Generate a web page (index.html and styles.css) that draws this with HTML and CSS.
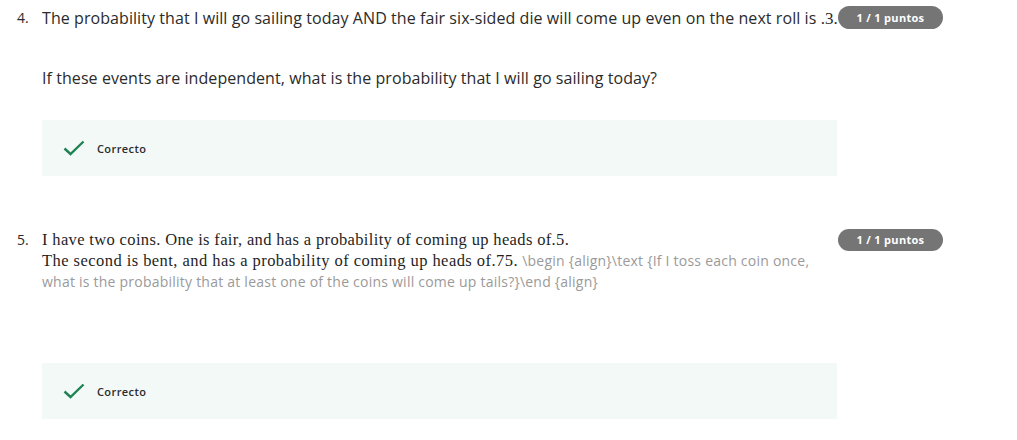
FILE: index.html
```html
<!DOCTYPE html>
<html>
<head>
<meta charset="utf-8">
<link rel="stylesheet" href="styles.css">
</head>
<body>
<div class="page">
  <div class="question q4">
    <div class="num">4.</div>
    <div class="body">
      <p class="line">The probability that I will go sailing today AND the fair six-sided die will come up even on the next roll is <span class="math">.3.</span></p>
      <p class="line second">If these events are independent, what is the probability that I will go sailing today?</p>
      <div class="result">
        <svg class="check" width="22" height="16" viewBox="0 0 22 16"><path d="M1.5 8.5 L7.5 14 L20.5 1.5" fill="none" stroke="#1f8354" stroke-width="2.4"/></svg>
        <span class="label">Correcto</span>
      </div>
    </div>
    <div class="badge">1 / 1 puntos</div>
  </div>

  <div class="question q5">
    <div class="num serifnum">5.</div>
    <div class="body">
      <div class="mathblock">
        <div class="serif">I have two coins. One is fair, and has a probability of coming up heads of.5.</div>
        <div class="cont"><span class="serif wide">The second is bent, and has a probability of coming up heads of.75.</span> <span class="raw">\begin {align}\text {If I toss each coin once, what is the probability that at least one of the coins will come up tails?}\end {align}</span></div>
      </div>
      <div class="result r2">
        <svg class="check" width="22" height="16" viewBox="0 0 22 16"><path d="M1.5 8.5 L7.5 14 L20.5 1.5" fill="none" stroke="#1f8354" stroke-width="2.4"/></svg>
        <span class="label">Correcto</span>
      </div>
    </div>
    <div class="badge">1 / 1 puntos</div>
  </div>
</div>
</body>
</html>
```

FILE: styles.css
```css
html, body {
  margin: 0;
  padding: 0;
  background: #ffffff;
}
.page {
  font-family: "Open Sans", sans-serif;
  color: #2b2b2b;
  padding-top: 6px;
}
.question {
  display: flex;
  align-items: flex-start;
}
.num {
  padding-left: 17px;
  box-sizing: border-box;
  width: 42px;
  flex: none;
  font-size: 14px;
  line-height: 24px;
}
.body {
  width: 796px;
  flex: none;
}
.line {
  margin: 0;
  font-size: 16px;
  line-height: 24px;
  white-space: nowrap;
  letter-spacing: 0.07px;
}
.line.second {
  margin-top: 35px;
}
.math {
  font-family: "Liberation Serif", serif;
  font-size: 17px;
  letter-spacing: 0;
}
.result {
  margin-top: 30px;
  width: 795px;
  height: 56px;
  background: #f3f9f7;
  display: flex;
  align-items: center;
  box-sizing: border-box;
  padding-left: 21px;
}
.check {
  display: block;
  margin-right: 12px;
}
.label {
  font-size: 11px;
  letter-spacing: 0.4px;
  color: #2b2b2b;
  font-weight: 600;
}
.badge {
  flex: none;
  width: 105px;
  height: 23px;
  border-radius: 12px;
  background: #757575;
  color: #ffffff;
  font-size: 11px;
  font-weight: 700;
  line-height: 23px;
  text-align: center;
  letter-spacing: 0.3px;
}
.q5 {
  margin-top: 53px;
}
.q5 .badge {
  height: 22px;
  line-height: 22px;
}
.serifnum {
  line-height: 21px;
  font-size: 14px;
}
.mathblock {
  line-height: 21px;
  width: 780px;
}
.serif {
  font-family: "Liberation Serif", serif;
  font-size: 16.5px;
  letter-spacing: 0.35px;
  color: #1f1f1f;
}
.serif.wide {
  letter-spacing: 0.45px;
}
.raw {
  font-size: 14px;
  letter-spacing: 0.23px;
  color: #9a9a9a;
}
.result.r2 {
  margin-top: 71px;
}
```
